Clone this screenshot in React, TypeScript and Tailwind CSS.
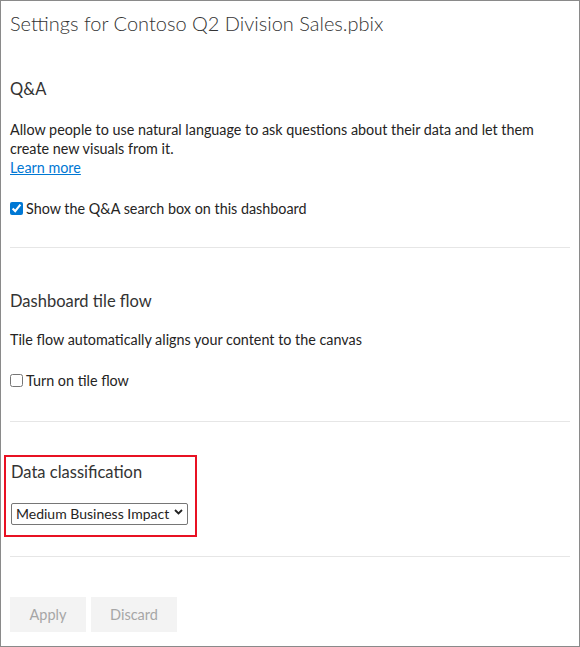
import React from "react";

export default function App() {
  const font = { fontFamily: '"Segoe UI", Lato, "Noto Sans", sans-serif' };
  return (
    <div
      className="w-[580px] h-[647px] border border-[#8a8a8a] bg-white text-[#252423] overflow-hidden flex flex-col"
      style={font}
    >
      <div className="px-[9px]">
        <h1 className="mt-[7px] text-[20px] leading-[30px] font-light text-[#333]">
          Settings for Contoso Q2 Division Sales.pbix
        </h1>

        <section className="mt-[40px] pb-[29px] border-b border-[#e6e6e6]">
          <h2 className="text-[16.5px] leading-[22px] text-[#333]">Q&amp;A</h2>
          <p className="mt-[20px] text-[14.35px] leading-[19px]">
            Allow people to use natural language to ask questions about their data and let them create new visuals from it.
            <br />
            <a href="#" className="text-[#0078d4] underline">Learn more</a>
          </p>
          <label className="mt-[22px] flex items-center gap-[3px] text-[14.35px] leading-[19px]">
            <input type="checkbox" defaultChecked className="w-[13px] h-[13px] m-0 accent-[#0078d4]" />
            Show the Q&amp;A search box on this dashboard
          </label>
        </section>

        <section className="mt-[42px] pb-[31px] border-b border-[#e6e6e6]">
          <h2 className="text-[16.5px] leading-[22px] text-[#333]">Dashboard tile flow</h2>
          <p className="mt-[18px] text-[14.35px] leading-[19px]">
            Tile flow automatically aligns your content to the canvas
          </p>
          <label className="mt-[22px] flex items-center gap-[3px] text-[14.35px] leading-[19px]">
            <input type="checkbox" className="w-[13px] h-[13px] m-0 accent-[#0078d4]" />
            Turn on tile flow
          </label>
        </section>

        <section className="mt-[33px] pb-[19px] border-b border-[#e6e6e6]">
          <div className="-ml-[6px] w-[193px] border-[2px] border-[#e81123] pl-[5px] pt-[4px] pb-[10px]">
            <h2 className="text-[16.5px] leading-[22px] text-[#333]">Data classification</h2>
            <div className="relative mt-[18px] w-[177px]">
              <select
                className="appearance-none w-full h-[22px] border border-[#767676] rounded-[2px] bg-white pl-[4px] pr-[12px] text-[14px] leading-[20px] text-[#252423]"
                style={font}
                defaultValue="mbi"
              >
                <option value="mbi">Medium Business Impact</option>
              </select>
              <svg
                className="pointer-events-none absolute right-[5px] top-[8px]"
                width="9"
                height="6"
                viewBox="0 0 9 6"
              >
                <path d="M1 1 L4.5 4.5 L8 1" fill="none" stroke="#222" strokeWidth="1.8" />
              </svg>
            </div>
          </div>
        </section>

        <div className="mt-[40px] flex gap-[5px]">
          <button className="w-[76px] h-[35px] bg-[#f3f3f3] text-[14.5px] text-[#a6a6a6]" style={font}>
            Apply
          </button>
          <button className="w-[86px] h-[35px] bg-[#f3f3f3] text-[14.5px] text-[#a6a6a6]" style={font}>
            Discard
          </button>
        </div>
      </div>
    </div>
  );
}
